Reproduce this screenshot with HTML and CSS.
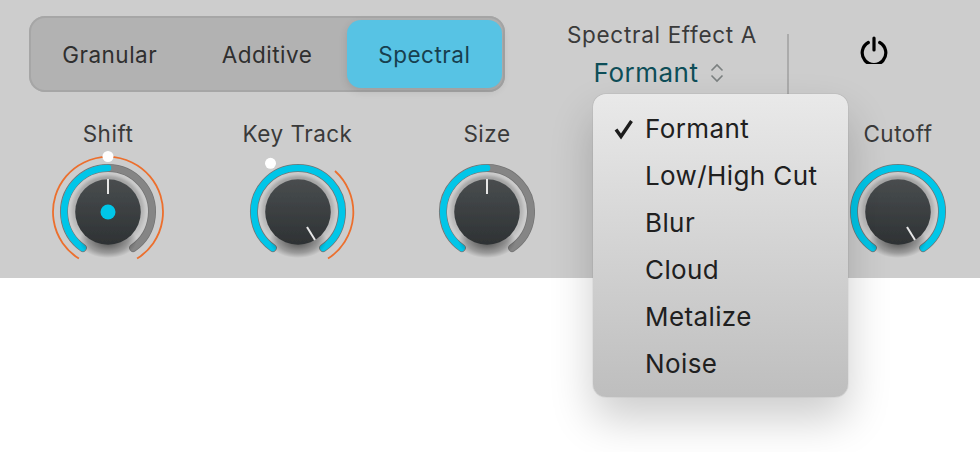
FILE: index.html
```html
<!DOCTYPE html>
<html lang="en">
<head>
<meta charset="utf-8">
<title>Spectral</title>
<link rel="stylesheet" href="styles.css">
</head>
<body>
<svg class="defs" width="0" height="0" aria-hidden="true">
  <defs>
    <linearGradient id="capFill" x1="0" y1="0" x2="0" y2="1">
      <stop offset="0" stop-color="#494d4f"/>
      <stop offset="1" stop-color="#2e3234"/>
    </linearGradient>
    <linearGradient id="haloFill" x1="0" y1="0" x2="0" y2="1">
      <stop offset="0" stop-color="#a0a0a0"/>
      <stop offset="0.5" stop-color="#b4b4b4"/>
      <stop offset="1" stop-color="#c6c6c6"/>
    </linearGradient>
    <radialGradient id="dropFill" cx="0.5" cy="0.5" r="0.5">
      <stop offset="0" stop-color="#000" stop-opacity=".6"/>
      <stop offset="0.7" stop-color="#000" stop-opacity=".25"/>
      <stop offset="1" stop-color="#000" stop-opacity="0"/>
    </radialGradient>
    <filter id="soft" x="-20%" y="-20%" width="140%" height="140%">
      <feGaussianBlur stdDeviation="0.600"/>
    </filter>
    <filter id="softer" x="-20%" y="-20%" width="140%" height="140%">
      <feGaussianBlur stdDeviation="1.400"/>
    </filter>
    <g id="cap">
      <circle r="36.500" fill="url(#haloFill)" filter="url(#softer)"/>
      <ellipse cx="0" cy="29" rx="29" ry="17" fill="url(#dropFill)"/>
      <circle r="32.800" fill="url(#capFill)" filter="url(#soft)"/>
    </g>
  </defs>
</svg>
<main class="panel">
  <div class="top">
    <div class="tabs">
      <span class="tab">Granular</span>
      <span class="tab">Additive</span>
      <span class="tab active">Spectral</span>
    </div>
    <div class="effect">
      <span class="effect-label">Spectral Effect A</span>
      <span class="effect-value">Formant
        <svg class="chev" width="16" height="20" viewBox="0 0 16 20"><path d="M2.500 7.500 8 2l5.500 5.500M2.500 12.500 8 18l5.500-5.500" fill="none" stroke="#7b8080" stroke-width="1.600"/></svg>
      </span>
    </div>
    <div class="sep"></div>
    <svg class="power" width="28" height="28" viewBox="0 0 28 28"><path d="M8.300 6.500a11.800 11.800 0 1 0 11.400 0M14 2v12" fill="none" stroke="#000" stroke-width="3.200" stroke-linecap="round"/></svg>
  </div>
  <div class="knobs">
    <div class="knob">
      <span class="knob-label">Shift</span>
      <svg class="dial" width="120" height="120" viewBox="-60 -60 120 120">
        <path class="orange" d="M-29.100 46.600A55 55 0 1 1 29.100 46.600"/>
        <path class="rim" d="M-25.200 36A44 44 0 1 1 25.200 36"/>
        <path class="track" d="M-25.200 36A44 44 0 1 1 25.200 36"/>
        <path class="value" d="M-25.200 36A44 44 0 0 1 0 -44"/>
        <use href="#cap"/>
        <path class="needle" d="M0 -33V-18"/>
        <circle class="center" r="7.500"/>
        <circle class="handle" cy="-55.500" r="5.500"/>
      </svg>
    </div>
    <div class="knob">
      <span class="knob-label">Key Track</span>
      <svg class="dial" width="120" height="120" viewBox="-60 -60 120 120">
        <path class="orange" d="M37 -41A55.300 55.300 0 0 1 30 46.600"/>
        <path class="rim" d="M-25.200 36A44 44 0 1 1 25.200 36"/>
        <path class="value" d="M-25.200 36A44 44 0 1 1 25.200 36"/>
        <use href="#cap"/>
        <path class="needle" d="M9 15 17 28"/>
        <circle class="handle" cx="-27.500" cy="-48.700" r="5.500"/>
      </svg>
    </div>
    <div class="knob">
      <span class="knob-label">Size</span>
      <svg class="dial" width="120" height="120" viewBox="-60 -60 120 120">
        <path class="rim" d="M-25.200 36A44 44 0 1 1 25.200 36"/>
        <path class="track" d="M-25.200 36A44 44 0 1 1 25.200 36"/>
        <path class="value" d="M-25.200 36A44 44 0 0 1 0 -44"/>
        <use href="#cap"/>
        <path class="needle" d="M0 -33V-18"/>
      </svg>
    </div>
    <div class="knob knob-hidden"></div>
    <div class="knob">
      <span class="knob-label">Cutoff</span>
      <svg class="dial" width="120" height="120" viewBox="-60 -60 120 120">
        <path class="rim" d="M-25.200 36A44 44 0 1 1 25.200 36"/>
        <path class="value" d="M-25.200 36A44 44 0 1 1 25.200 36"/>
        <use href="#cap"/>
        <path class="needle" d="M9 15 17 28"/>
      </svg>
    </div>
  </div>
</main>
<ul class="menu">
  <li class="item checked"><svg class="check" width="22" height="22" viewBox="0 0 22 22"><path d="M3 11.500 8 18.500 18.500 3" fill="none" stroke="#1c1c1c" stroke-width="3.400"/></svg>Formant</li>
  <li class="item">Low/High Cut</li>
  <li class="item">Blur</li>
  <li class="item">Cloud</li>
  <li class="item">Metalize</li>
  <li class="item">Noise</li>
</ul>
</body>
</html>
```

FILE: styles.css
```css
* { box-sizing: border-box; }
html, body { margin: 0; background: #fff; }
body { position: relative; width: 980px; height: 452px; overflow: hidden; font-family: Inter, "Liberation Sans", sans-serif; }
.defs { position: absolute; }
.panel { height: 278px; background: #cdcdcd; display: flex; flex-direction: column; }
.top { display: flex; align-items: flex-start; padding: 16px 0 0 29px; height: 121px; }
.tabs { display: grid; grid-template-columns: repeat(3, 1fr); gap: 2px; width: 476px; height: 76px; padding: 4px 3px; border-radius: 16px; background: #b2b2b2; box-shadow: inset 0 0 0 2px #a6a6a6; }
.tab { display: flex; align-items: center; justify-content: center; font-size: 22.500px; letter-spacing: .5px; color: #2f2f2f; border-radius: 14px; }
.tab.active { background: #57c3e4; color: #173f4f; box-shadow: 0 3px 8px rgba(0,0,0,.12); }
.effect { display: flex; flex-direction: column; align-items: center; width: 188px; margin-left: 63px; }
.effect-label { font-size: 22.500px; letter-spacing: .7px; line-height: 24px; margin-top: 7px; color: #3a3a3a; white-space: nowrap; }
.effect-value { display: flex; align-items: center; gap: 11px; margin-top: 9px; margin-left: -5px; font-size: 26px; letter-spacing: .5px; line-height: 34px; color: #0e4e58; }
.chev { display: block; }
.sep { width: 2px; height: 60px; margin: 18px 0 0 31px; background: #ababab; }
.power { margin: 20px 0 0 71px; }
.knobs { display: flex; padding-left: 48px; gap: 69.500px; }
.knob { width: 120px; display: flex; flex-direction: column; align-items: center; }
.knob-hidden { width: 152px; }
.knob-label { font-size: 22.500px; letter-spacing: .5px; line-height: 24px; color: #3a3a3a; white-space: nowrap; margin-top: 1px; }
.dial { display: block; margin-top: 6px; overflow: visible; }
.dial path { fill: none; }
.orange { stroke: #ec6f2d; stroke-width: 1.800; }
.rim { stroke: #737373; stroke-width: 8; stroke-linecap: round; }
.track { stroke: #858585; stroke-width: 6.500; stroke-linecap: round; }
.value { stroke: #00c6e8; stroke-width: 6.500; stroke-linecap: round; }
.dial .needle { stroke: #e6e6e6; stroke-width: 2; }
.center { fill: #00c6e8; }
.handle { fill: #fff; }
.menu { position: absolute; left: 593px; top: 94px; width: 255px; height: 303px; margin: 0; padding: 11px 0 0; list-style: none; border-radius: 13px; background: linear-gradient(#e9e9e9, #bebebe); box-shadow: 0 0 1px rgba(0,0,0,.4), 0 22px 44px rgba(0,0,0,.2); }
.item { position: relative; height: 47px; padding-left: 52px; font-size: 26px; letter-spacing: .4px; line-height: 47px; color: #202020; white-space: nowrap; }
.check { position: absolute; left: 20px; top: 13px; }
```
